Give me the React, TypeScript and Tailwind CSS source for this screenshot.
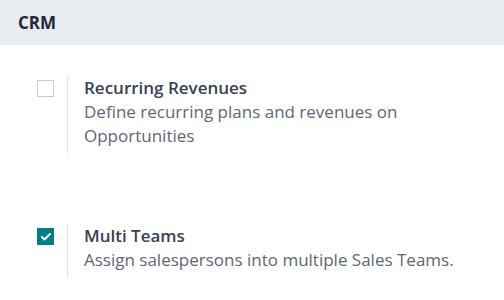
import { Check } from "lucide-react";

const SETTINGS = [
  {
    title: "Recurring Revenues",
    desc: "Define recurring plans and revenues on Opportunities",
    checked: false,
  },
  {
    title: "Multi Teams",
    desc: "Assign salespersons into multiple Sales Teams.",
    checked: true,
  },
];

function Setting({ title, desc, checked }: { title: string; desc: string; checked: boolean }) {
  return (
    <div className="flex">
      <div className="w-[67px] shrink-0 pl-[37px] pt-[4px]">
        {checked ? (
          <div className="w-[17px] h-[17px] bg-[#017e84] flex items-center justify-center">
            <Check size={12} strokeWidth={4} className="text-white" />
          </div>
        ) : (
          <div className="w-[17px] h-[17px] border border-[#c8ccd2] bg-white" />
        )}
      </div>
      <div className="border-l border-[#dee2e6] pl-[16px] pb-[5px] w-[405px]">
        <div className="text-[17px] leading-[24px] font-semibold text-[#374151]">{title}</div>
        <div className="text-[17px] leading-[24px] text-[#5f6672]">{desc}</div>
      </div>
    </div>
  );
}

export default function App() {
  return (
    <div className="w-[504px] h-[300px] bg-white overflow-hidden" style={{ fontFamily: '"Open Sans", sans-serif' }}>
      <div className="h-[45px] bg-[#e9ecef] flex items-center px-[18px]">
        <h2 className="text-[17px] font-bold text-[#1f2937]">CRM</h2>
      </div>
      <div className="pt-[31px] flex flex-col gap-[71px]">
        {SETTINGS.map((s) => (
          <Setting key={s.title} {...s} />
        ))}
      </div>
    </div>
  );
}
